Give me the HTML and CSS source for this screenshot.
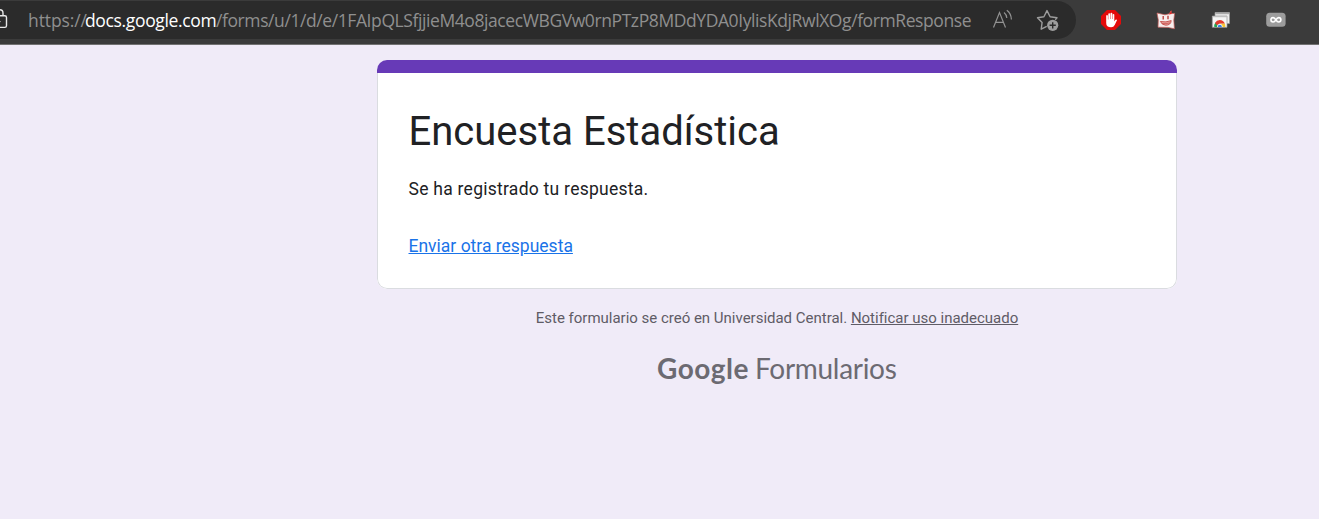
FILE: index.html
```html
<!DOCTYPE html>
<html lang="es">
<head>
<meta charset="utf-8">
<title>Encuesta Estadística</title>
<link rel="stylesheet" href="styles.css">
</head>
<body>
<header class="toolbar">
  <div class="omnibox">
    <svg class="lock" width="8" height="24" viewBox="0 0 8 24" fill="none" stroke="#e8e8e8" stroke-width="1.4"><path d="M-4 7.8H4.8q1.7 0 1.7 1.7v8.2q0 1.7-1.7 1.7H-4M-3 7.8V5.2q0-3.4 3-3.4t3 3.4v2.6"/><circle cx="0" cy="13.6" r=".7" fill="#e8e8e8" stroke="none"/></svg>
    <div class="url"><span class="scheme">https://</span><span class="host">docs.google.com</span><span class="path">/forms/u/1/d/e/1FAIpQLSfjjieM4o8jacecWBGVw0rnPTzP8MDdYDA0IylisKdjRwlXOg/formResponse</span></div>
    <svg class="read" width="22" height="22" viewBox="0 0 22 22" fill="none" stroke="#929292" stroke-width="1.2"><path d="M1.5 18.5 7.5 3.5 13.5 18.5M3.6 13.4h7.8M12 3.4q2.6 2 2.8 5.6M14.8 1.2q4.4 3.2 4.6 9.2"/></svg>
    <svg class="star" width="24" height="24" viewBox="0 0 24 24"><path d="M10.2 18.6 5.2 21.2 6.1 14.5 1.5 9.8 7.9 8.8 11 2.6 14.1 8.8 21 9.8 19.7 11.2" fill="none" stroke="#9d9d9d" stroke-width="1.4" stroke-linejoin="round" stroke-linecap="round"/><circle cx="16.7" cy="17.3" r="5.6" fill="#9d9d9d"/><path d="M16.7 14.2v6.2M13.6 17.3h6.2" stroke="#2b2b2b" stroke-width="1.4"/></svg>
  </div>
  <div class="extensions">
    <svg width="20" height="20" viewBox="0 0 20 20"><path d="M6 0h8l6 6v8l-6 6H6l-6-6V6z" fill="#e30b0b"/><path d="M5.2 10.5V6q0-.9.8-.9t.9.9v3.5h.4V4.2q0-.9.9-.9t.9.9V9h.4V3.6q0-.9.9-.9t.9.9V9h.4V4.8q0-.8.8-.8t.8.8v6.6l1.2-1.6q.9-.8 1.6.1l-2.4 5.2q-1 2.2-3.6 2.2-4.9 0-4.9-4.3z" fill="#fff"/></svg>
    <svg width="20" height="20" viewBox="0 0 20 20"><path d="M1 3 9 4.8 13.2 3.8 15.2.8 15 3.6 18.6 3.4 17.8 10 18.4 18.8 12 17.4 2 17.2 2.3 10z" fill="#f6eeee" stroke="#c55a56" stroke-width=".7"/><path d="M7.2 6v3.4M12 5.8v3.4" stroke="#b9332f" stroke-width="1.3"/><path d="M4.4 11.5q5.6 1.2 10.8-.9-.4 4.6-5.4 4.6-3.8 0-5.4-3.7z" fill="#e7a09c" stroke="#c54b46" stroke-width=".9"/><path d="M6 13.5q4 .6 8-.6" fill="none" stroke="#c54b46" stroke-width=".7"/><path d="m12.8 4.4 2.6-3.8.1 3.4z" fill="#df2522"/></svg>
    <svg width="20" height="20" viewBox="0 0 20 20"><path d="M4 2.5h14.5v11H4z" fill="#eee" stroke="#999" stroke-width=".7"/><path d="M4.3 2.7h13.9v1.5H4.3z" fill="#aaa"/><path d="M1.3 6h14.7v11.3H1.3z" fill="#f5f5f5" stroke="#999" stroke-width=".7"/><path d="M1.6 6.2H15.7v1H1.6z" fill="#bbb"/><path d="M3.3 17q-.3-2.6 1.1-4.4L8.8 15v2z" fill="#24a852"/><path d="M8.8 13.4h5.1q.6 1.8.3 3.6H8.8z" fill="#f7c530"/><path d="M4 12.9Q5.6 10 8.8 10q3.6 0 5 3.5H8.8L6 15.2z" fill="#e33b2e"/><path d="M6 17a2.8 2.9 0 1 1 5.6 0z" fill="#fff"/><path d="M6.7 17a2.1 2.3 0 1 1 4.2 0z" fill="#397fe6"/></svg>
    <svg width="20" height="20" viewBox="0 0 20 20"><rect x=".2" y="2.8" width="19.4" height="14" rx="3.5" fill="#9c9c9c"/><path d="M9.9 9.8Q8.6 7.6 7.1 7.6a2.2 2.2 0 0 0 0 4.4q1.5 0 2.8-2.2t2.8-2.2a2.2 2.2 0 0 1 0 4.4q-1.5 0-2.8-2.2z" fill="none" stroke="#fff" stroke-width="1.6"/></svg>
  </div>
</header>
<main class="page">
  <section class="card">
    <div class="accent"></div>
    <div class="content">
      <h1 class="title">Encuesta Estadística</h1>
      <p class="message">Se ha registrado tu respuesta.</p>
      <a class="again">Enviar otra respuesta</a>
    </div>
  </section>
  <p class="notice">Este formulario se creó en Universidad Central. <a class="report">Notificar uso inadecuado</a></p>
  <div class="brand"><span class="google">Google</span><span class="product">Formularios</span></div>
</main>
</body>
</html>
```
FILE: styles.css
```css
* { box-sizing: border-box; }
body { margin: 0; background: #f0ebf8; font-family: Roboto, "Liberation Sans", sans-serif; height: 519px; overflow: hidden; }
.toolbar { display: flex; height: 45px; background: #3b3b3b; border-bottom: 1px solid #717171; }
.omnibox { display: flex; align-items: center; width: 1076px; height: 38px; margin-top: 1px; background: #2b2b2b; border-radius: 0 19px 19px 0; flex: none; }
.lock { flex: none; margin-right: 20px; }
.url { width: 942px; flex: none; white-space: nowrap; font: 17.5px/24px "Open Sans", "Noto Sans", sans-serif; color: #8f8f8f; display: flex; }
.scheme { width: 57px; letter-spacing: -.1px; }
.host { width: 131px; color: #fff; letter-spacing: -.35px; }
.path { letter-spacing: -.41px; }
.read { margin-left: 22px; flex: none; }
.star { margin-left: 22px; flex: none; }
.extensions { display: flex; gap: 35px; padding: 10px 0 0 25px; }
.extensions svg { flex: none; }
.page { display: flex; flex-direction: column; width: 800px; margin-left: 377px; padding-top: 15px; }
.card { height: 229px; background: #fff; border-radius: 10px; overflow: hidden; }
.accent { height: 13px; background: #673ab7; }
.content { height: 216px; border: 1px solid #dadce0; border-top: 0; border-radius: 0 0 10px 10px; padding: 34px 30px 0 30.5px; }
.title { margin: 0; font-size: 40px; line-height: 50px; font-weight: 400; color: #202124; }
.message { margin: 20px 0 0; font-size: 17.5px; line-height: 25px; letter-spacing: .26px; color: #202124; }
.again { display: block; width: max-content; margin-top: 32px; font-size: 17.5px; line-height: 25px; color: #1a73e8; text-decoration: underline; }
.notice { margin: 19px 0 0; text-align: center; font-size: 15px; line-height: 20px; letter-spacing: -.01px; color: #5f5c66; white-space: nowrap; }
.report { text-decoration: underline; }
.brand { display: flex; align-items: baseline; margin: 22px 0 0 280px; font-family: Lato, Inter, sans-serif; font-size: 28px; line-height: 36px; color: #6c6a72; white-space: nowrap; }
.google { width: 98px; font-weight: 700; letter-spacing: .5px; }
.product { letter-spacing: -.3px; }
```
